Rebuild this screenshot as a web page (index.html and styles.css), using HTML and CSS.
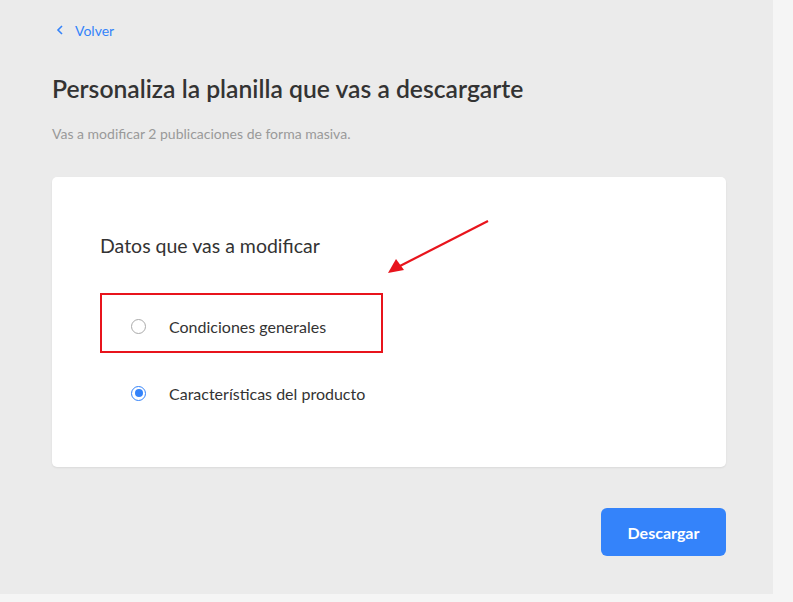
FILE: index.html
```html
<!DOCTYPE html>
<html lang="es">
<head>
  <meta charset="UTF-8" />
  <meta name="viewport" content="width=device-width, initial-scale=1.0" />
  <title>Personaliza la planilla</title>
  <link rel="stylesheet" href="styles.css">
</head>
<body>
  <div class="main">
    <a class="back" href="#">
      <svg width="8" height="10" viewBox="0 0 8 10"><path d="M6 1 L2 5 L6 9" fill="none" stroke="#3483fa" stroke-width="1.6"/></svg>
      Volver
    </a>
    <h1>Personaliza la planilla que vas a descargarte</h1>
    <p class="subtitle">Vas a modificar 2 publicaciones de forma masiva.</p>

    <div class="card">
      <h2>Datos que vas a modificar</h2>
      <div class="options">
        <label class="option">
          <span class="radio"></span>
          Condiciones generales
        </label>
        <label class="option">
          <span class="radio checked"></span>
          Características del producto
        </label>
      </div>

      <div class="highlight"></div>
      <svg class="arrow" width="110" height="60" viewBox="0 0 110 60">
        <line x1="104" y1="4" x2="14" y2="50" stroke="#e8141c" stroke-width="2.2"/>
        <polygon points="4,56 12,42 20,53" fill="#e8141c"/>
      </svg>
    </div>

    <div class="actions">
      <button class="btn">Descargar</button>
    </div>
  </div>
</body>
</html>
```

FILE: styles.css
```css
body {
  margin: 0;
  background: #f5f5f5;
  font-family: "Lato", "Open Sans", sans-serif;
  color: #333;
}
.main {
  width: 773px;
  height: 594px;
  background: #ebebeb;
  box-sizing: border-box;
  padding: 19px 0 0 52px;
}
.back {
  display: inline-flex;
  align-items: center;
  gap: 11px;
  color: #3483fa;
  text-decoration: none;
  font-size: 14px;
  padding-left: 4px;
  height: 18px;
}
h1 {
  margin: 35px 0 0;
  font-size: 24.7px;
  font-weight: 600;
  color: #333;
  line-height: 30px;
}
.subtitle {
  margin: 22px 0 0;
  font-size: 14px;
  color: #999;
  line-height: 16px;
}
.card {
  position: relative;
  width: 674px;
  height: 290px;
  margin-top: 35px;
  background: #fff;
  border-radius: 5px;
  box-shadow: 0 1px 2px rgba(0, 0, 0, 0.08);
  box-sizing: border-box;
  padding: 56px 48px 0;
}
h2 {
  margin: 0;
  font-size: 19.5px;
  font-weight: 400;
  color: #333;
  line-height: 26px;
}
.options {
  margin-top: 57px;
  padding-left: 31px;
  display: flex;
  flex-direction: column;
  gap: 47px;
}
.option {
  display: flex;
  align-items: center;
  gap: 23px;
  font-size: 16px;
  color: #333;
  height: 20px;
}
.radio {
  width: 15px;
  height: 15px;
  border: 1px solid #aaa;
  border-radius: 50%;
  box-sizing: border-box;
  display: inline-flex;
  align-items: center;
  justify-content: center;
}
.radio.checked {
  border: 1.5px solid #3483fa;
}
.radio.checked::after {
  content: "";
  width: 8px;
  height: 8px;
  border-radius: 50%;
  background: #3483fa;
}
.highlight {
  position: absolute;
  left: 48px;
  top: 116px;
  width: 283px;
  height: 60px;
  border: 2px solid #e8141c;
  box-sizing: border-box;
}
.arrow {
  position: absolute;
  left: 332px;
  top: 40px;
}
.actions {
  width: 674px;
  display: flex;
  justify-content: flex-end;
  margin-top: 41px;
}
.btn {
  width: 125px;
  height: 48px;
  background: #3483fa;
  border: none;
  border-radius: 6px;
  color: #fff;
  font-family: inherit;
  font-size: 16px;
  font-weight: 700;
}
```
